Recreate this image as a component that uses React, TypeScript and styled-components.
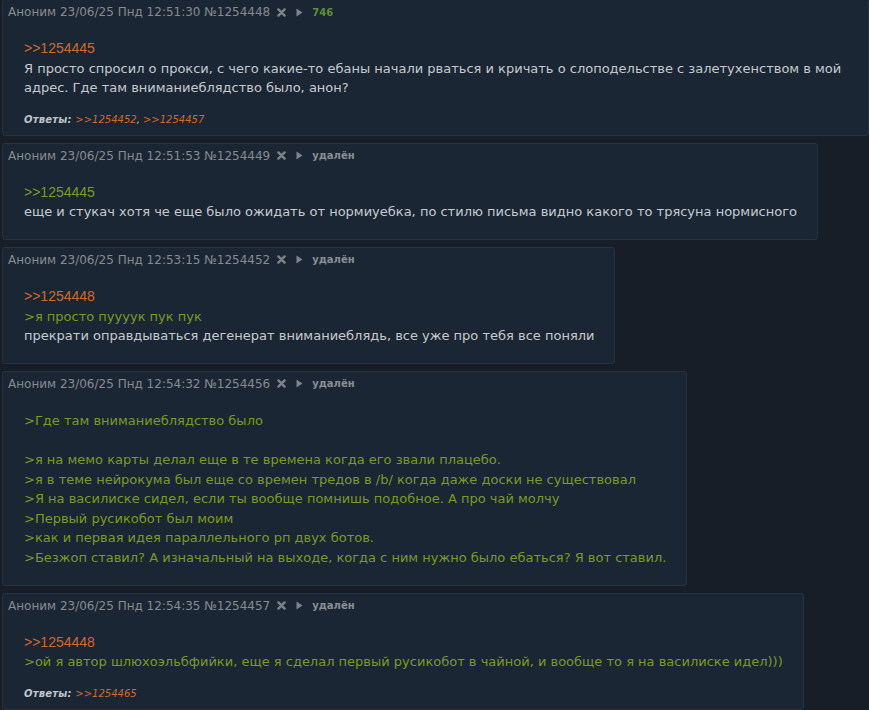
import React from 'react';
import styled, { createGlobalStyle } from 'styled-components';

type Kind = 'link' | 'greenlink' | 'green' | 'text' | 'empty';

type Line = { kind: Kind; text?: string };

type Post = {
  time: string;
  num: string;
  status: string;
  deleted: boolean;
  lines: Line[];
  replies?: string[];
};

const posts: Post[] = [
  {
    time: '23/06/25 Пнд 12:51:30',
    num: '1254448',
    status: '746',
    deleted: false,
    lines: [
      { kind: 'link', text: '>>1254445' },
      {
        kind: 'text',
        text: 'Я просто спросил о прокси, с чего какие-то ебаны начали рваться и кричать о слоподельстве с залетухенством в мой адрес. Где там вниманиеблядство было, анон?',
      },
    ],
    replies: ['>>1254452', '>>1254457'],
  },
  {
    time: '23/06/25 Пнд 12:51:53',
    num: '1254449',
    status: 'удалён',
    deleted: true,
    lines: [
      { kind: 'greenlink', text: '>>1254445' },
      { kind: 'text', text: 'еще и стукач хотя че еще было ожидать от нормиуебка, по стилю письма видно какого то трясуна нормисного' },
    ],
  },
  {
    time: '23/06/25 Пнд 12:53:15',
    num: '1254452',
    status: 'удалён',
    deleted: true,
    lines: [
      { kind: 'link', text: '>>1254448' },
      { kind: 'green', text: '>я просто пуууук пук пук' },
      { kind: 'text', text: 'прекрати оправдываться дегенерат вниманиеблядь, все уже про тебя все поняли' },
    ],
  },
  {
    time: '23/06/25 Пнд 12:54:32',
    num: '1254456',
    status: 'удалён',
    deleted: true,
    lines: [
      { kind: 'green', text: '>Где там вниманиеблядство было' },
      { kind: 'empty' },
      { kind: 'green', text: '>я на мемо карты делал еще в те времена когда его звали плацебо.' },
      { kind: 'green', text: '>я в теме нейрокума был еще со времен тредов в /b/ когда даже доски не существовал' },
      { kind: 'green', text: '>Я на василиске сидел, если ты вообще помнишь подобное. А про чай молчу' },
      { kind: 'green', text: '>Первый русикобот был моим' },
      { kind: 'green', text: '>как и первая идея параллельного рп двух ботов.' },
      { kind: 'green', text: '>Безжоп ставил? А изначальный на выходе, когда с ним нужно было ебаться? Я вот ставил.' },
    ],
  },
  {
    time: '23/06/25 Пнд 12:54:35',
    num: '1254457',
    status: 'удалён',
    deleted: true,
    lines: [
      { kind: 'link', text: '>>1254448' },
      { kind: 'green', text: '>ой я автор шлюхоэльбфийки, еще я сделал первый русикобот в чайной, и вообще то я на василиске идел)))' },
    ],
    replies: ['>>1254465'],
  },
];

const GlobalStyle = createGlobalStyle`
  html, body {
    margin: 0;
    padding: 0;
    background: #171e27;
  }
  body {
    font-family: "DejaVu Sans", Verdana, sans-serif;
    color: #c6cacf;
    overflow: hidden;
  }
`;

const Thread = styled.div`
  display: flex;
  flex-direction: column;
  align-items: flex-start;
  gap: 7px;
  padding: 0 0 0 2px;
  margin-top: -1px;
`;

const PostBox = styled.div`
  box-sizing: border-box;
  max-width: 100%;
  background: #1b2634;
  border: 1px solid #28323f;
  border-radius: 3px;
  padding: 3px 20px 5px 5px;
`;

const Header = styled.div`
  display: flex;
  align-items: center;
  height: 18px;
  font-size: 12px;
  color: #878b90;
  white-space: nowrap;
`;

const Meta = styled.span`
  margin-right: 7px;
`;

const IconSlot = styled.span<{ $gap: number }>`
  display: inline-flex;
  align-items: center;
  margin-right: ${(p) => p.$gap}px;
`;

const Status = styled.span<{ $deleted: boolean }>`
  font-size: 10px;
  font-weight: bold;
  color: ${(p) => (p.$deleted ? '#8a8e93' : '#5f8d3c')};
`;

const Body = styled.div<{ $hasReplies: boolean }>`
  margin: 18px 0 ${(p) => (p.$hasReplies ? 0 : 12)}px 16px;
  font-size: 13px;
  line-height: 19.6px;
`;

const rowColor: Record<Kind, string> = {
  link: '#cf6a2b',
  greenlink: '#7a9a24',
  green: '#7a9a24',
  text: '#c6cacf',
  empty: '#c6cacf',
};

const Row = styled.div<{ $kind: Kind }>`
  min-height: 19.6px;
  color: ${(p) => rowColor[p.$kind]};
  ${(p) =>
    (p.$kind === 'link' || p.$kind === 'greenlink') &&
    `font-family: "Liberation Sans", Arial, sans-serif; font-size: 14px;`}
`;

const Replies = styled.div`
  margin: 15px 0 3px 16px;
  font-size: 10px;
  line-height: 14px;
  font-style: italic;
  color: #bfc3c8;
`;

const RepliesLabel = styled.span`
  font-weight: bold;
  letter-spacing: 0.2px;
`;

const ReplyLink = styled.span`
  color: #cf6a2b;
`;

const CrossIcon = () => (
  <svg width="9" height="9" viewBox="0 0 9 9">
    <path d="M1.4 1.4 L7.6 7.6 M7.6 1.4 L1.4 7.6" stroke="#7f8388" strokeWidth="2.4" strokeLinecap="round" />
  </svg>
);

const PlayIcon = () => (
  <svg width="7" height="9" viewBox="0 0 7 9">
    <path d="M0.5 0.5 L6.5 4.5 L0.5 8.5 Z" fill="#7f8388" />
  </svg>
);

const PostView = ({ post }: { post: Post }) => (
  <PostBox>
    <Header>
      <Meta>
        Аноним {post.time} №{post.num}
      </Meta>
      <IconSlot $gap={10}>
        <CrossIcon />
      </IconSlot>
      <IconSlot $gap={9}>
        <PlayIcon />
      </IconSlot>
      <Status $deleted={post.deleted}>{post.status}</Status>
    </Header>
    <Body $hasReplies={!!post.replies}>
      {post.lines.map((line, i) => (
        <Row key={i} $kind={line.kind}>
          {line.text ?? ''}
        </Row>
      ))}
    </Body>
    {post.replies && (
      <Replies>
        <RepliesLabel>Ответы: </RepliesLabel>
        {post.replies.map((r, i) => (
          <React.Fragment key={r}>
            {i > 0 && ', '}
            <ReplyLink>{r}</ReplyLink>
          </React.Fragment>
        ))}
      </Replies>
    )}
  </PostBox>
);

const App = () => (
  <>
    <GlobalStyle />
    <Thread>
      {posts.map((p) => (
        <PostView key={p.num} post={p} />
      ))}
    </Thread>
  </>
);

export default App;
